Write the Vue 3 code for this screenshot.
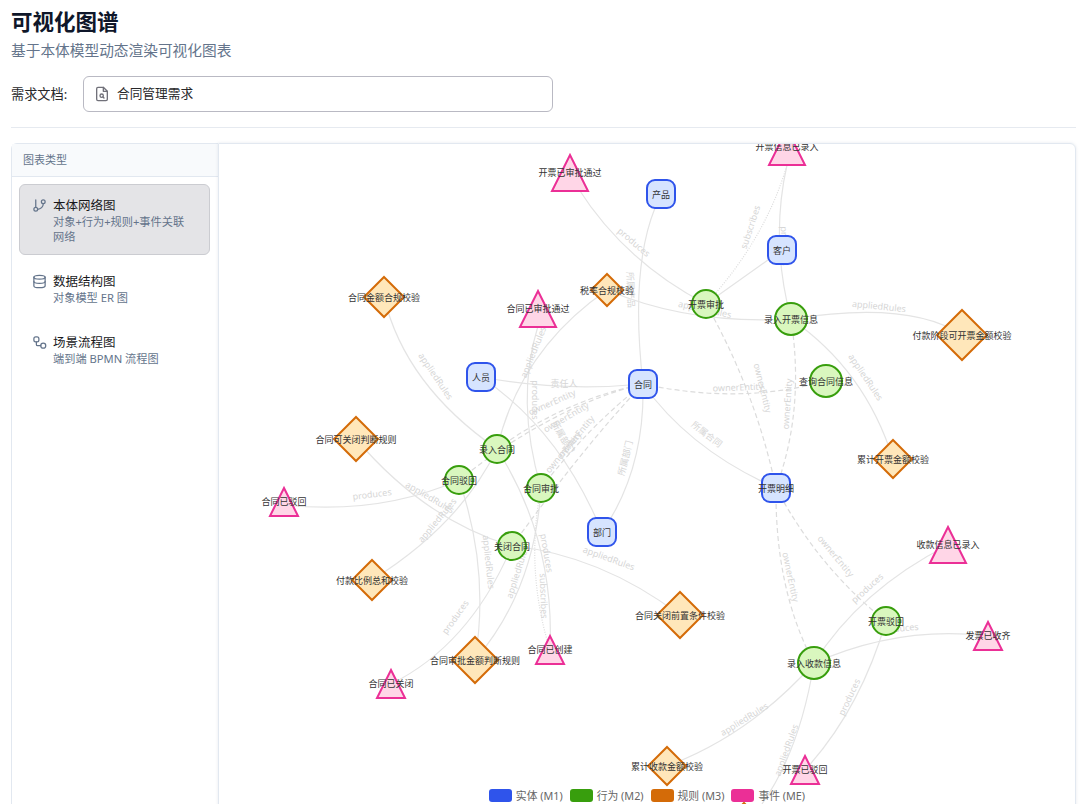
<script setup>
// all graph coordinates are the page coordinates of the canvas (see viewBox)
const entities = [
  ['产品', 661, 194], ['客户', 782, 250], ['合同', 643, 384],
  ['人员', 481, 377], ['部门', 602, 532], ['开票明细', 776, 488],
]
const actions = [
  ['开票审批', 706, 304, 14], ['录入开票信息', 791, 319, 16], ['查询合同信息', 826, 381, 16],
  ['录入合同', 497, 449, 14], ['合同驳回', 459, 480, 14], ['合同审批', 541, 488, 14],
  ['关闭合同', 512, 546, 14], ['开票驳回', 886, 621, 14], ['录入收款信息', 814, 663, 16],
]
const rules = [
  ['合同金额合规校验', 384, 297, 20], ['税率合规校验', 607, 290, 16],
  ['付款阶段可开票金额校验', 962, 335, 25], ['累计开票金额校验', 893, 459, 19],
  ['合同可关闭判断规则', 356, 439, 22], ['付款比例总和校验', 372, 580, 20],
  ['合同关闭前置条件校验', 680, 615, 23], ['合同审批金额判断规则', 475, 660, 23],
  ['累计收款金额校验', 667, 766, 19], ['', 744, 823, 20],
]
const events = [
  ['开票已审批通过', 570, 173, 18], ['开票信息已录入', 787, 147, 18],
  ['合同已审批通过', 538, 309, 18], ['合同已驳回', 284, 502, 14],
  ['合同已关闭', 391, 684, 14], ['合同已创建', 550, 650, 14],
  ['收款信息已录入', 948, 545, 18], ['发票已收齐', 988, 636, 14],
  ['开票已驳回', 805, 770, 14],
]

const trianglePoints = (x, y, s) => `${x},${y - s} ${x + s},${y + s} ${x - s},${y + s}`
const diamondPoints = (x, y, r) => `${x},${y - r} ${x + r},${y} ${x},${y + r} ${x - r},${y}`

// d, line style
const edges = [
  ['M655 208Q630 270 643 384', 'solid'],
  ['M578 188Q625 262 706 304', 'solid'],
  ['M706 304Q765 240 787 165', 'dotted'],
  ['M706 304L782 250', 'solid'],
  ['M791 319Q770 240 787 165', 'solid'],
  ['M607 290Q690 325 791 319', 'solid'],
  ['M607 290Q520 350 497 449', 'solid'],
  ['M384 297Q405 385 497 449', 'solid'],
  ['M356 439Q425 520 512 546', 'solid'],
  ['M284 505Q380 515 459 480', 'solid'],
  ['M372 580Q460 525 497 449', 'solid'],
  ['M459 480Q490 570 475 660', 'solid'],
  ['M541 488Q535 590 475 660', 'solid'],
  ['M497 449Q555 540 550 650', 'solid'],
  ['M541 488Q525 570 550 650', 'dotted'],
  ['M512 546Q470 645 391 684', 'solid'],
  ['M512 546Q600 555 680 615', 'solid'],
  ['M538 326Q515 400 541 488', 'solid'],
  ['M481 377Q560 392 643 384', 'solid'],
  ['M481 377Q560 430 602 532', 'solid'],
  ['M602 532Q645 470 643 384', 'solid'],
  ['M643 384Q690 450 776 488', 'solid'],
  ['M497 449Q565 400 643 384', 'dashed'],
  ['M459 480Q555 405 643 384', 'dashed'],
  ['M541 488Q590 425 643 384', 'dashed'],
  ['M512 546Q585 445 643 384', 'dashed'],
  ['M643 384Q740 405 826 381', 'dashed'],
  ['M706 304Q755 390 776 488', 'dashed'],
  ['M791 319Q805 410 776 488', 'dashed'],
  ['M776 488Q775 590 814 663', 'dashed'],
  ['M776 488Q820 570 886 621', 'dashed'],
  ['M791 319Q910 300 962 335', 'solid'],
  ['M791 319Q865 370 893 459', 'solid'],
  ['M814 663Q860 590 948 545', 'solid'],
  ['M814 663Q900 625 988 636', 'solid'],
  ['M886 621Q860 710 805 770', 'solid'],
  ['M814 663Q750 735 667 766', 'solid'],
  ['M814 663Q800 750 762 804', 'solid'],
]

// text, x, y, rotation
const edgeLabels = [
  ['produces', 634, 242, 40], ['subscribes', 750, 227, -72], ['produces', 785, 246, 88],
  ['所属产品', 631, 290, 88], ['appliedRules', 705, 309, 12], ['appliedRules', 533, 352, -68],
  ['appliedRules', 436, 376, 56], ['appliedRules', 430, 497, 30], ['produces', 372, 494, -7],
  ['appliedRules', 437, 520, -50], ['appliedRules', 489, 562, 84], ['appliedRules', 517, 572, -72],
  ['produces', 547, 553, 80], ['subscribes', 544, 596, 88], ['produces', 455, 617, -55],
  ['appliedRules', 609, 558, 20], ['produces', 535, 400, 90], ['责任人', 564, 383, 0],
  ['所属部门', 563, 437, 60], ['所属部门', 625, 458, -76], ['所属合同', 707, 434, 38],
  ['ownerEntity', 552, 402, -24], ['ownerEntity', 566, 417, -30], ['ownerEntity', 576, 436, -50],
  ['ownerEntity', 563, 452, -50], ['ownerEntity', 738, 387, -2], ['ownerEntity', 763, 388, 76],
  ['ownerEntity', 787, 404, -86], ['ownerEntity', 791, 577, 78], ['ownerEntity', 836, 556, 50],
  ['appliedRules', 879, 306, 6], ['appliedRules', 866, 377, 56], ['produces', 867, 588, -42],
  ['produces', 899, 628, -5], ['produces', 849, 697, -65], ['appliedRules', 744, 719, -32],
  ['appliedRules', 786, 750, -70],
]

const legend = [
  ['实体 (M1)', '#2f54eb'], ['行为 (M2)', '#389e0d'],
  ['规则 (M3)', '#d46b08'], ['事件 (ME)', '#eb2f96'],
]
</script>

<template>
  <div class="page">
    <h1 class="title">可视化图谱</h1>
    <p class="subtitle">基于本体模型动态渲染可视化图表</p>

    <!-- Document selector -->
    <div class="doc-row">
      <span class="doc-label">需求文档:</span>
      <div class="doc-select">
        <svg viewBox="0 0 24 24" fill="none" stroke="currentColor" stroke-width="2"
             stroke-linecap="round" stroke-linejoin="round">
          <path d="M14 2H6a2 2 0 0 0-2 2v16a2 2 0 0 0 2 2h12a2 2 0 0 0 2-2V8z"/>
          <path d="M14 2v6h6"/>
          <circle cx="11.5" cy="14.5" r="2.5"/>
          <path d="M13.5 16.5 15 18"/>
        </svg>
        <span>合同管理需求</span>
      </div>
    </div>

    <div class="divider"></div>

    <div class="workspace">
      <!-- Chart types -->
      <aside class="types">
        <div class="types-head">图表类型</div>
        <div class="types-list">
          <div class="type-item active">
            <svg viewBox="0 0 24 24" fill="none" stroke="currentColor" stroke-width="2"
                 stroke-linecap="round" stroke-linejoin="round">
              <line x1="6" y1="3" x2="6" y2="15"/>
              <circle cx="18" cy="6" r="3"/>
              <circle cx="6" cy="18" r="3"/>
              <path d="M18 9a9 9 0 0 1-9 9"/>
            </svg>
            <div>
              <div class="type-name">本体网络图</div>
              <div class="type-desc">对象+行为+规则+事件关联网络</div>
            </div>
          </div>
          <div class="type-item">
            <svg viewBox="0 0 24 24" fill="none" stroke="currentColor" stroke-width="2"
                 stroke-linecap="round" stroke-linejoin="round">
              <ellipse cx="12" cy="5" rx="9" ry="3"/>
              <path d="M3 5v14a9 3 0 0 0 18 0V5"/>
              <path d="M3 12a9 3 0 0 0 18 0"/>
            </svg>
            <div>
              <div class="type-name">数据结构图</div>
              <div class="type-desc">对象模型 ER 图</div>
            </div>
          </div>
          <div class="type-item">
            <svg viewBox="0 0 24 24" fill="none" stroke="currentColor" stroke-width="2"
                 stroke-linecap="round" stroke-linejoin="round">
              <rect x="3" y="3" width="8" height="8" rx="3"/>
              <path d="M7 11v4a2 2 0 0 0 2 2h5"/>
              <circle cx="18" cy="17" r="4"/>
            </svg>
            <div>
              <div class="type-name">场景流程图</div>
              <div class="type-desc">端到端 BPMN 流程图</div>
            </div>
          </div>
        </div>
      </aside>

      <!-- Graph canvas -->
      <section class="canvas">
        <svg class="graph" viewBox="218 143 858 665">
          <path v-for="(e, i) in edges" :key="'e' + i" :d="e[0]" class="edge" :class="e[1]"/>
          <text v-for="(l, i) in edgeLabels" :key="'l' + i" class="edge-label" :x="l[1]" :y="l[2]"
                :transform="`rotate(${l[3]} ${l[1]} ${l[2]})`">{{ l[0] }}</text>

          <g v-for="n in entities" :key="n[0]">
            <rect class="entity" :x="n[1] - 14" :y="n[2] - 14" width="28" height="28" rx="8"/>
            <text class="node-label" :x="n[1]" :y="n[2]">{{ n[0] }}</text>
          </g>
          <g v-for="n in actions" :key="n[0]">
            <circle class="action" :cx="n[1]" :cy="n[2]" :r="n[3]"/>
            <text class="node-label" :x="n[1]" :y="n[2]">{{ n[0] }}</text>
          </g>
          <g v-for="n in rules" :key="n[1]">
            <polygon class="rule" :points="diamondPoints(n[1], n[2], n[3])"/>
            <text class="node-label" :x="n[1]" :y="n[2]">{{ n[0] }}</text>
          </g>
          <g v-for="n in events" :key="n[0]">
            <polygon class="event" :points="trianglePoints(n[1], n[2], n[3])"/>
            <text class="node-label" :x="n[1]" :y="n[2] - 1">{{ n[0] }}</text>
          </g>
        </svg>

        <div class="legend">
          <div v-for="l in legend" :key="l[0]" class="legend-item">
            <i class="swatch" :style="{ background: l[1] }"></i>{{ l[0] }}
          </div>
        </div>
      </section>
    </div>
  </div>
</template>

<style scoped>
.page {
  height: 100vh;
  overflow: hidden;
  box-sizing: border-box;
  padding: 8px 4px 0 11px;
  font-family: "Noto Sans", "Noto Sans CJK SC", sans-serif;
  color: #0f172a;
  background: #fff;
}

.title {
  margin: 0;
  font-size: 21.5px;
  line-height: 28px;
  font-weight: 700;
}

.subtitle {
  margin: 4px 0 0;
  font-size: 14.7px;
  line-height: 20px;
  color: #64748b;
}

/* ── Document row ── */
.doc-row {
  display: flex;
  align-items: center;
  margin-top: 16px;
}

.doc-label {
  width: 72px;
  font-size: 13.2px;
  padding-bottom: 2px;
  color: #27272a;
}

.doc-select {
  display: flex;
  align-items: center;
  gap: 7px;
  width: 470px;
  height: 36px;
  box-sizing: border-box;
  padding: 0 10px;
  border: 1px solid #b9b9c3;
  border-radius: 6px;
  font-size: 12.7px;
  color: #27272a;
}

.doc-select span {
  padding-bottom: 3px;
}

.doc-select svg {
  width: 16px;
  height: 16px;
  margin-bottom: 1px;
  color: #71717a;
}

.divider {
  height: 1px;
  margin-top: 15px;
  background: #e6eaf0;
}

/* ── Workspace ── */
.workspace {
  display: flex;
  height: 665px;
  margin-top: 15px;
}

.types {
  width: 207px;
  flex-shrink: 0;
  box-sizing: border-box;
  border: 1px solid #e2e8f0;
  border-right: none;
  border-radius: 6px 0 0 0;
  background: #fff;
}

.types-head {
  height: 33px;
  box-sizing: border-box;
  padding-left: 11px;
  line-height: 32px;
  font-size: 11px;
  color: #64748b;
  background: #f8fafc;
  border-bottom: 1px solid #e2e8f0;
}

.types-list {
  display: flex;
  flex-direction: column;
  gap: 5px;
  padding: 7px 8px 7px 7px;
}

.type-item {
  display: flex;
  gap: 6px;
  padding: 12px 20px 10px 12px;
  border: 1px solid transparent;
  border-radius: 6px;
  min-height: 32px;
}

.type-item.active {
  background: #e4e4e7;
  border-color: #cbccd1;
}

.type-item svg {
  width: 15px;
  height: 15px;
  flex-shrink: 0;
  margin-top: 1px;
  color: #64748b;
}

.type-name {
  font-size: 12.5px;
  line-height: 17px;
  color: #18181b;
}

.type-desc {
  font-size: 11.2px;
  line-height: 15px;
  color: #64748b;
}

/* ── Canvas ── */
.canvas {
  position: relative;
  flex: 1;
  border: 1px solid #e2e8f0;
  border-radius: 0 6px 0 0;
  box-shadow: 0 0 3px rgba(148, 163, 184, 0.25);
  overflow: hidden;
}

.graph {
  display: block;
  width: 858px;
  height: 665px;
  margin: -1px;
}

.edge {
  fill: none;
  stroke: #e4e4e4;
  stroke-width: 1.2;
}

.edge.dashed {
  stroke: #dcdcdc;
  stroke-dasharray: 5 3;
}

.edge.dotted {
  stroke: #dcdcdc;
  stroke-dasharray: 1 1.5;
}

.edge-label {
  font-size: 9px;
  fill: #d6d6d6;
  text-anchor: middle;
  dominant-baseline: central;
}

.node-label {
  font-size: 9px;
  fill: #333;
  text-anchor: middle;
  dominant-baseline: central;
}

.entity {
  fill: #d6e4ff;
  stroke: #2f54eb;
  stroke-width: 2;
}

.action {
  fill: #d9f7be;
  stroke: #389e0d;
  stroke-width: 2;
}

.rule {
  fill: #ffe7ba;
  stroke: #d46b08;
  stroke-width: 2;
}

.event {
  fill: #ffd6e7;
  stroke: #eb2f96;
  stroke-width: 2;
}

/* ── Legend ── */
.legend {
  position: absolute;
  left: 0;
  right: 0;
  bottom: 5px;
  display: flex;
  justify-content: center;
  gap: 7px;
  font-size: 10.8px;
  line-height: 13px;
  color: #666;
}

.legend-item {
  display: flex;
  align-items: center;
  gap: 4px;
  white-space: nowrap;
}

.swatch {
  width: 23px;
  height: 13px;
  border-radius: 3px;
}
</style>

<style>
html, body {
  overflow: hidden;
}
</style>
